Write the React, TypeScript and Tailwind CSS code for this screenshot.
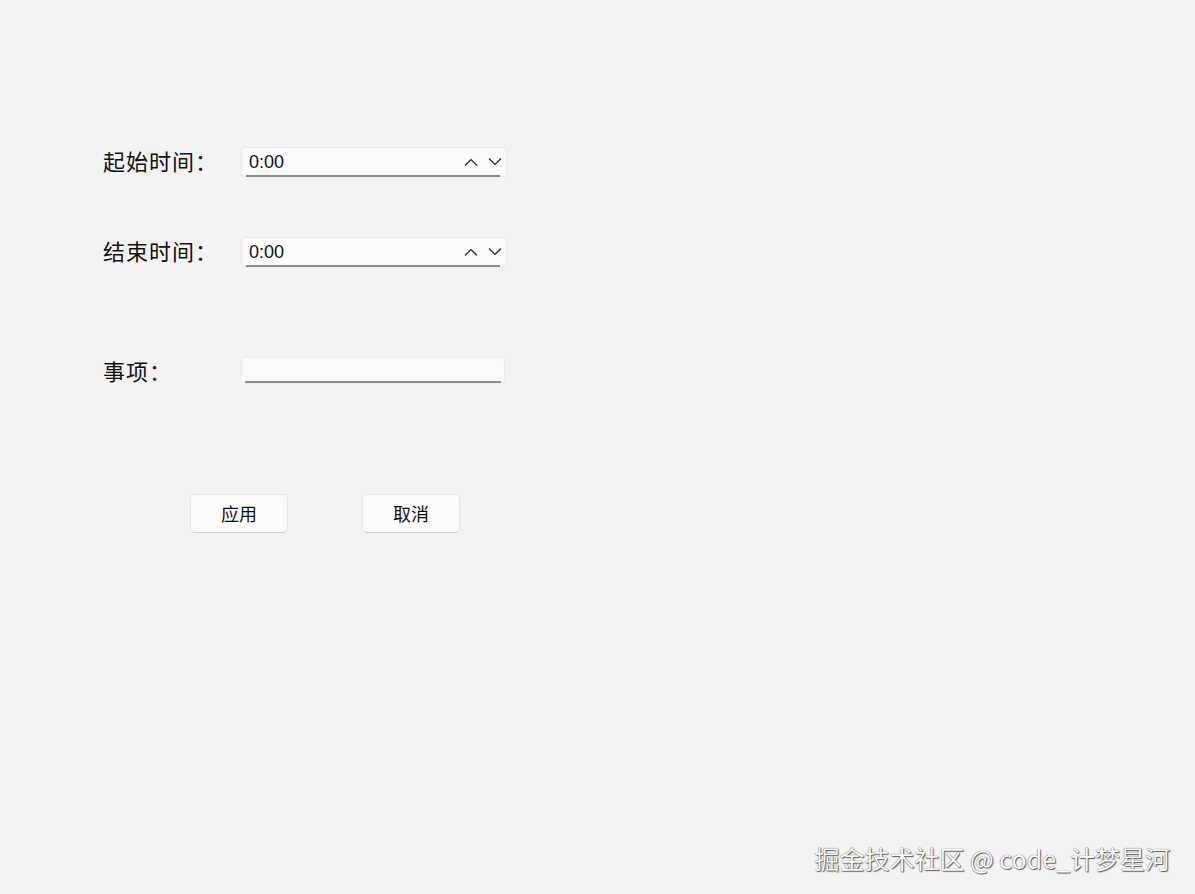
import React from "react";

const cjk = { fontFamily: '"Noto Sans CJK SC", "Noto Sans", sans-serif' };
const latin = { fontFamily: '"Liberation Sans", "Noto Sans CJK SC", sans-serif' };

function Chevrons() {
  return (
    <div className="flex items-center gap-[10px] pr-[4px]">
      <svg width="14" height="8" viewBox="0 0 14 8" fill="none" stroke="#222" strokeWidth="1.2">
        <path d="M1 7.5 L7 1.5 L13 7.5" />
      </svg>
      <svg width="14" height="8" viewBox="0 0 14 8" fill="none" stroke="#222" strokeWidth="1.2">
        <path d="M1 0.5 L7 6.5 L13 0.5" />
      </svg>
    </div>
  );
}

function TimeBox() {
  return (
    <div className="relative w-[266px] h-[30px] rounded-[4px] bg-[#fbfbfb] border border-[#e8e8e8] flex items-center justify-between pl-[7px]">
      <span className="text-[18px] text-[#111] leading-none" style={latin}>0:00</span>
      <Chevrons />
      <div className="absolute left-[4px] right-[6px] bottom-[-1px] h-[2px] bg-[#8a8a8a]" />
    </div>
  );
}

function TextBox() {
  return (
    <div className="relative w-[264px] h-[27px] rounded-[4px] bg-[#fbfbfb] border border-[#ececec]">
      <div className="absolute left-[3px] right-[3px] bottom-[0px] h-[2px] bg-[#8a8a8a]" />
    </div>
  );
}

function Btn({ label }: { label: string }) {
  return (
    <button
      className="w-[98px] h-[39px] rounded-[5px] bg-[#fbfbfb] border border-[#e6e6e6] border-b-[#cfcfcf] text-[18px] text-[#111] flex items-center justify-center"
      style={cjk}
    >
      {label}
    </button>
  );
}

export default function App() {
  return (
    <div className="w-[1195px] h-[894px] bg-[#f3f3f3] relative overflow-hidden" style={cjk}>
      <div className="flex flex-col pl-[103px] pt-[147px]">
        <div className="flex items-center h-[30px]">
          <div className="w-[138px] text-[22px] text-[#111] leading-none pb-[5px] tracking-[1px]">起始时间：</div>
          <TimeBox />
        </div>
        <div className="flex items-center h-[30px] mt-[60px]">
          <div className="w-[138px] text-[22px] text-[#111] leading-none pb-[5px] tracking-[1px]">结束时间：</div>
          <TimeBox />
        </div>
        <div className="flex items-center h-[27px] mt-[90px]">
          <div className="w-[138px] text-[22px] text-[#111] leading-none pb-[2px] tracking-[1px]">事项：</div>
          <TextBox />
        </div>
        <div className="flex items-center mt-[110px] pl-[87px] gap-[74px]">
          <Btn label="应用" />
          <Btn label="取消" />
        </div>
      </div>
      <div
        className="absolute right-[25px] bottom-[23px] text-[25px] text-[#fafafa] leading-none"
        style={{
          ...cjk,
          textShadow: "0 0 1px #333, 1px 1px 1px #666",
        }}
      >
        掘金技术社区 @ code_计梦星河
      </div>
    </div>
  );
}
